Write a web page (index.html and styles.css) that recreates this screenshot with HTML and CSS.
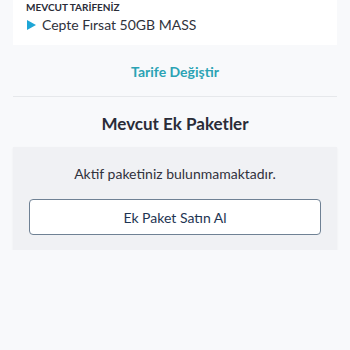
FILE: index.html
```html
<!DOCTYPE html>
<html lang="tr">
<head>
<meta charset="utf-8">
<link rel="stylesheet" href="styles.css">
</head>
<body>
<div class="tariff-card">
  <div class="tariff-label">MEVCUT TARİFENİZ</div>
  <div class="tariff-row">
    <svg class="play" width="9" height="10" viewBox="0 0 9 10"><polygon points="0,0 9,5 0,10" fill="#1ea6d6"/></svg>
    <span class="tariff-name">Cepte Fırsat 50GB MASS</span>
  </div>
</div>
<div class="change-link">Tarife Değiştir</div>
<div class="divider"></div>
<h2 class="section-title">Mevcut Ek Paketler</h2>
<div class="empty-box">
  <p class="empty-text">Aktif paketiniz bulunmamaktadır.</p>
  <button class="buy-btn">Ek Paket Satın Al</button>
</div>
</body>
</html>
```
FILE: styles.css
```css
html, body {
  margin: 0;
  padding: 0;
  background: #f8f9fb;
  font-family: Lato, "Open Sans", sans-serif;
  color: #2d2f3a;
}
.tariff-card {
  margin: 0 13px;
  background: #ffffff;
  padding: 0 13px 10px;
  height: 35px;
}
.tariff-label {
  font-size: 10px;
  font-weight: 700;
  line-height: 14px;
  color: #2a2c38;
}
.tariff-row {
  display: flex;
  align-items: center;
  height: 21px;
}
.play {
  margin-left: 1px;
  margin-right: 6px;
}
.tariff-name {
  font-size: 14px;
  line-height: 20px;
  color: #30323c;
}
.change-link {
  margin-top: 17px;
  text-align: center;
  font-size: 14px;
  font-weight: 700;
  line-height: 20px;
  color: #2ba3b4;
}
.divider {
  margin: 14px 13px 0;
  height: 1px;
  background: #e6e8eb;
}
.section-title {
  margin: 15px 0 0;
  text-align: center;
  font-size: 17px;
  font-weight: 700;
  line-height: 24px;
  color: #2a2c38;
}
.empty-box {
  margin: 11px 13px 0;
  background: #f0f1f4;
  padding: 17px 16px 15px;
  box-shadow: 0 1px 2px rgba(0,0,0,0.06);
}
.empty-text {
  margin: 0;
  text-align: center;
  font-size: 14px;
  line-height: 20px;
  color: #30323c;
}
.buy-btn {
  display: block;
  width: 100%;
  margin-top: 15px;
  height: 36px;
  background: #ffffff;
  border: 1px solid #6f8194;
  border-radius: 4px;
  font-family: inherit;
  font-size: 14px;
  color: #1e3553;
  padding: 0;
}
```
